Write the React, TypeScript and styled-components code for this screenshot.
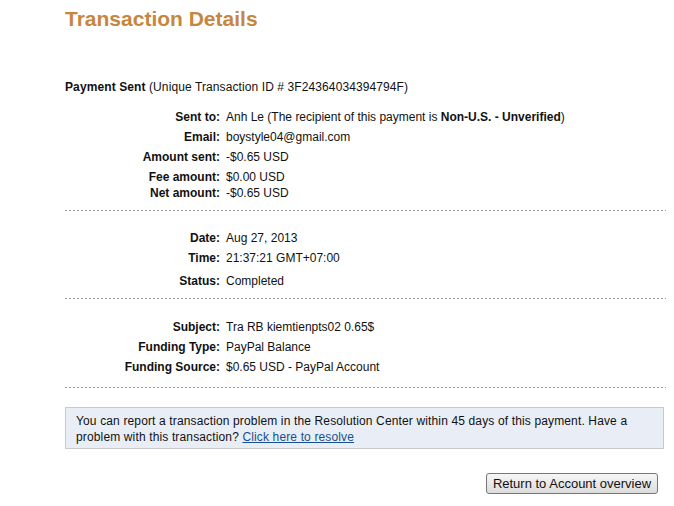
import React from 'react';
import styled, { createGlobalStyle } from 'styled-components';

const GlobalStyle = createGlobalStyle`
  body {
    margin: 0;
    background: #fff;
    font-family: Arial, "Liberation Sans", sans-serif;
    font-size: 12px;
    color: #111;
  }
`;

const Page = styled.div`
  width: 600px;
  padding: 7px 0 0 65px;
`;

const Title = styled.h1`
  margin: 0;
  font-size: 21px;
  line-height: 24px;
  font-weight: bold;
  color: #c7863f;
`;

const Heading = styled.div`
  margin-top: 48px;
  line-height: 16px;
  letter-spacing: 0.1px;
`;

const Details = styled.div<{ $gap: number }>`
  display: grid;
  grid-template-columns: 155px 1fr;
  column-gap: 6px;
  margin-top: ${({ $gap }) => $gap}px;
`;

const Label = styled.div<{ $top?: number }>`
  text-align: right;
  font-weight: bold;
  line-height: 16px;
  margin-top: ${({ $top }) => $top ?? 0}px;
`;

const Value = styled.div<{ $top?: number }>`
  line-height: 16px;
  margin-top: ${({ $top }) => $top ?? 0}px;
`;

const Dots = styled.div<{ $gap: number }>`
  height: 1px;
  width: 601px;
  margin-top: ${({ $gap }) => $gap}px;
  background: repeating-linear-gradient(to right, #9a9a9a 0 2px, transparent 2px 4px);
`;

const Notice = styled.div`
  margin-top: 19px;
  width: 577px;
  padding: 5px 10px 3px 10px;
  background: #e9eef6;
  border: 1px solid #c9c9c9;
  line-height: 16px;
  letter-spacing: 0.14px;
`;

const ResolveLink = styled.a`
  color: #1a4f8c;
  text-decoration: underline;
`;

const Actions = styled.div`
  width: 593px;
  display: flex;
  justify-content: flex-end;
  margin-top: 24px;
`;

const Button = styled.button`
  height: 21px;
  width: 172px;
  padding: 0;
  font-family: Arial, "Liberation Sans", sans-serif;
  font-size: 13px;
  color: #111;
  border: 1px solid #777;
  border-radius: 3px;
  background: linear-gradient(#f6f6f6, #dcdcdc);
`;

type Row = { label: string; value: React.ReactNode; top?: number };

const rowsA: Row[] = [
  {
    label: 'Sent to:',
    value: (
      <>
        Anh Le (The recipient of this payment is <b>Non-U.S. - Unverified</b>)
      </>
    ),
  },
  { label: 'Email:', value: 'boystyle04@gmail.com', top: 4 },
  { label: 'Amount sent:', value: '-$0.65 USD', top: 4 },
  { label: 'Fee amount:', value: '$0.00 USD', top: 4 },
  { label: 'Net amount:', value: '-$0.65 USD', top: 0 },
];

const rowsB: Row[] = [
  { label: 'Date:', value: 'Aug 27, 2013' },
  { label: 'Time:', value: '21:37:21 GMT+07:00', top: 4 },
  { label: 'Status:', value: 'Completed', top: 7 },
];

const rowsC: Row[] = [
  { label: 'Subject:', value: 'Tra RB kiemtienpts02 0.65$' },
  { label: 'Funding Type:', value: 'PayPal Balance', top: 4 },
  { label: 'Funding Source:', value: '$0.65 USD - PayPal Account', top: 4 },
];

const Section: React.FC<{ rows: Row[]; gap: number }> = ({ rows, gap }) => (
  <Details $gap={gap}>
    {rows.map((r) => (
      <React.Fragment key={r.label}>
        <Label $top={r.top}>{r.label}</Label>
        <Value $top={r.top}>{r.value}</Value>
      </React.Fragment>
    ))}
  </Details>
);

export default function App() {
  return (
    <Page>
      <GlobalStyle />
      <Title>Transaction Details</Title>
      <Heading>
        <b>Payment Sent</b> (Unique Transaction ID # 3F24364034394794F)
      </Heading>
      <Section rows={rowsA} gap={14} />
      <Dots $gap={9} />
      <Section rows={rowsB} gap={19} />
      <Dots $gap={9} />
      <Section rows={rowsC} gap={20} />
      <Dots $gap={12} />
      <Notice>
        You can report a transaction problem in the Resolution Center within 45 days of this payment. Have a
        problem with this transaction? <ResolveLink href="#">Click here to resolve</ResolveLink>
      </Notice>
      <Actions>
        <Button>Return to Account overview</Button>
      </Actions>
    </Page>
  );
}
